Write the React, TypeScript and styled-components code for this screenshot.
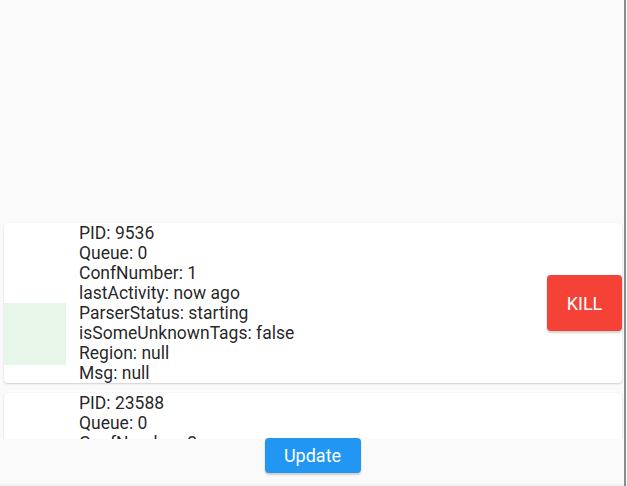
import React from "react";
import styled, { createGlobalStyle } from "styled-components";

const Global = createGlobalStyle`
  html, body { margin: 0; padding: 0; background: #fafafa; }
  body { font-family: Roboto, "Noto Sans", sans-serif; }
`;

const Window = styled.div`
  width: 628px;
  height: 486px;
  display: flex;
  flex-direction: column;
  box-sizing: border-box;
  border-right: 1px solid #d0d0d0;
  background: #fafafa;
  position: relative;
  overflow: hidden;
  &::after {
    content: "";
    position: absolute;
    top: 0;
    right: 1px;
    width: 2px;
    height: 100%;
    background: #8c8c8c;
  }
  &::before {
    content: "";
    position: absolute;
    left: 0;
    right: 0;
    bottom: 0;
    height: 3px;
    background: linear-gradient(#fafafa, #ececec);
  }
`;

const ListArea = styled.div`
  height: 439px;
  flex: none;
  overflow: hidden;
  display: flex;
  flex-direction: column;
  gap: 10px;
  padding: 223px 5px 0 4px;
  box-sizing: border-box;
`;

const Card = styled.div`
  flex: none;
  background: #ffffff;
  border-radius: 4px;
  box-shadow: 0 1px 2px rgba(0, 0, 0, 0.16), 0 0 1px rgba(0, 0, 0, 0.1);
  display: flex;
  align-items: center;
  min-height: 160px;
`;

const StatusBox = styled.div<{ $color: string }>`
  width: 62px;
  height: 62px;
  flex: none;
  align-self: flex-start;
  margin-top: 80px;
  background: ${(p) => p.$color};
`;

const Info = styled.div`
  flex: 1;
  align-self: flex-start;
  padding-left: 13px;
  font-size: 17.5px;
  line-height: 20px;
  color: rgba(0, 0, 0, 0.87);
`;

const Line = styled.div`
  white-space: nowrap;
`;

const KillButton = styled.button`
  width: 75px;
  height: 56px;
  flex: none;
  border: none;
  border-radius: 4px;
  background: #f44336;
  color: #ffffff;
  font-family: Roboto, sans-serif;
  font-size: 18px;
  box-shadow: 0 2px 2px rgba(0, 0, 0, 0.18), 0 0 1px rgba(0, 0, 0, 0.12);
  cursor: pointer;
  padding: 0;
`;

const Footer = styled.div`
  flex: 1;
  display: flex;
  justify-content: center;
  align-items: flex-start;
  padding-right: 2px;
  margin-top: -1px;
`;

const UpdateButton = styled.button`
  width: 96px;
  height: 35px;
  border: none;
  border-radius: 4px;
  background: #2196f3;
  color: #ffffff;
  font-family: Roboto, sans-serif;
  font-size: 18px;
  padding: 0;
  box-shadow: 0 2px 2px rgba(0, 0, 0, 0.18), 0 0 1px rgba(0, 0, 0, 0.12);
  cursor: pointer;
`;

type Proc = {
  pid: number;
  queue: number;
  conf: number;
  lastActivity: string;
  status: string;
  unknown: boolean;
  region: string;
  msg: string;
};

const procs: Proc[] = [
  { pid: 9536, queue: 0, conf: 1, lastActivity: "now ago", status: "starting", unknown: false, region: "null", msg: "null" },
  { pid: 23588, queue: 0, conf: 2, lastActivity: "now ago", status: "starting", unknown: false, region: "null", msg: "null" },
];

export default function App() {
  return (
    <>
      <Global />
      <Window>
        <ListArea>
          {procs.map((p) => (
            <Card key={p.pid}>
              <StatusBox $color="#e8f5e9" />
              <Info>
                <Line>PID: {p.pid}</Line>
                <Line>Queue: {p.queue}</Line>
                <Line>ConfNumber: {p.conf}</Line>
                <Line>lastActivity: {p.lastActivity}</Line>
                <Line>ParserStatus: {p.status}</Line>
                <Line>isSomeUnknownTags: {String(p.unknown)}</Line>
                <Line>Region: {p.region}</Line>
                <Line>Msg: {p.msg}</Line>
              </Info>
              <KillButton>KILL</KillButton>
            </Card>
          ))}
        </ListArea>
        <Footer>
          <UpdateButton>Update</UpdateButton>
        </Footer>
      </Window>
    </>
  );
}
